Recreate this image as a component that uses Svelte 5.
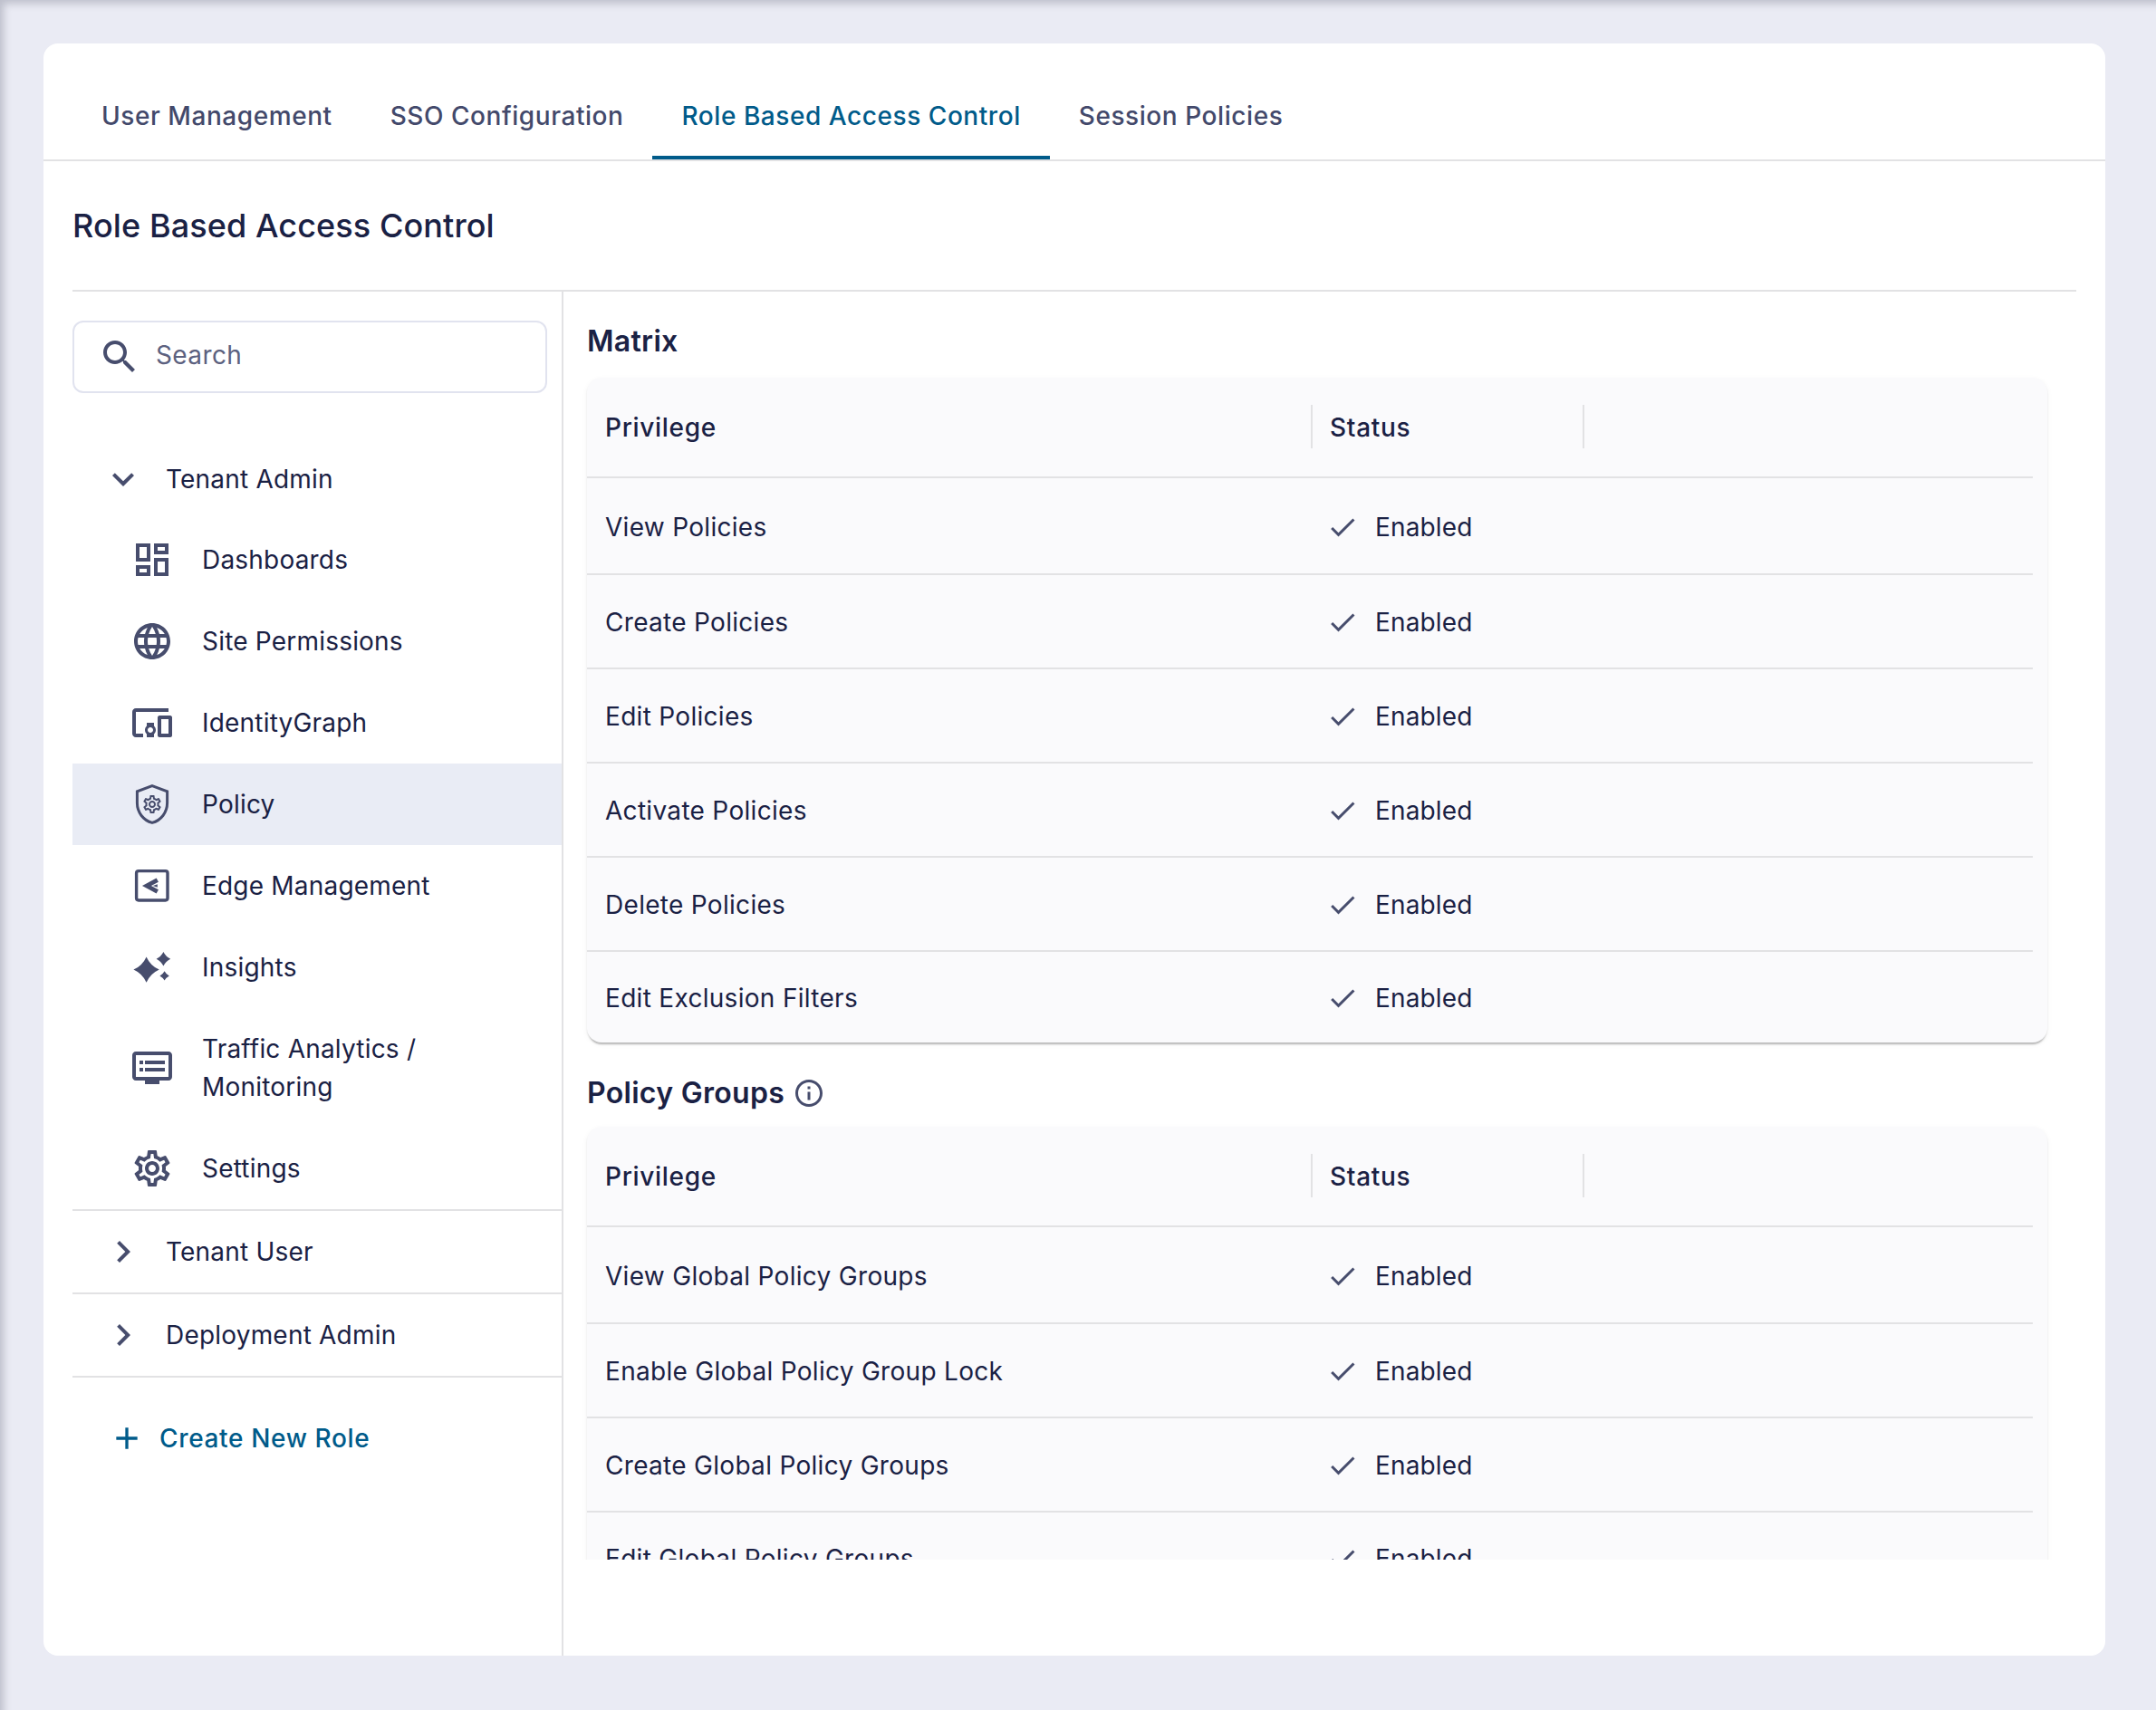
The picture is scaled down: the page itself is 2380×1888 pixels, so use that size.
<script>
  const tabs = ['User Management', 'SSO Configuration', 'Role Based Access Control', 'Session Policies'];
  const activeTab = 'Role Based Access Control';

  const gear =
    'M19.43 12.98c.04-.32.07-.64.07-.98 0-.34-.03-.66-.07-.98l2.11-1.65c.19-.15.24-.42.12-.64l-2-3.46c-.09-.16-.26-.25-.44-.25-.06 0-.12.01-.17.03l-2.49 1c-.52-.4-1.08-.73-1.69-.98l-.38-2.65C14.46 2.18 14.25 2 14 2h-4c-.25 0-.46.18-.49.42l-.38 2.65c-.61.25-1.17.59-1.69.98l-2.49-1c-.06-.02-.12-.03-.18-.03-.17 0-.34.09-.43.25l-2 3.46c-.13.22-.07.49.12.64l2.11 1.65c-.04.32-.07.65-.07.98 0 .33.03.66.07.98l-2.11 1.65c-.19.15-.24.42-.12.64l2 3.46c.09.16.26.25.44.25.06 0 .12-.01.17-.03l2.49-1c.52.4 1.08.73 1.69.98l.38 2.65c.03.24.24.42.49.42h4c.25 0 .46-.18.49-.42l.38-2.65c.61-.25 1.17-.59 1.69-.98l2.49 1c.06.02.12.03.18.03.17 0 .34-.09.43-.25l2-3.46c.12-.22.07-.49-.12-.64l-2.11-1.65zm-1.98-1.71c.04.31.05.52.05.73 0 .21-.02.43-.05.73l-.14 1.13.89.7 1.08.84-.7 1.21-1.27-.51-1.04-.42-.9.68c-.43.32-.84.56-1.25.73l-1.06.43-.16 1.13-.2 1.35h-1.4l-.19-1.35-.16-1.13-1.06-.43c-.43-.18-.83-.41-1.23-.71l-.91-.7-1.06.43-1.27.51-.7-1.21 1.08-.84.89-.7-.14-1.13c-.03-.31-.05-.54-.05-.74s.02-.43.05-.73l.14-1.13-.89-.7-1.08-.84.7-1.21 1.27.51 1.04.42.9-.68c.43-.32.84-.56 1.25-.73l1.06-.43.16-1.13.2-1.35h1.39l.19 1.35.16 1.13 1.06.43c.43.18.83.41 1.23.71l.91.7 1.06-.43 1.27-.51.7 1.21-1.07.85-.89.7.14 1.13zM12 8c-2.21 0-4 1.79-4 4s1.79 4 4 4 4-1.79 4-4-1.79-4-4-4zm0 6c-1.1 0-2-.9-2-2s.9-2 2-2 2 .9 2 2-.9 2-2 2z';

  const navItems = [
    { label: 'Dashboards', icon: 'dashboard' },
    { label: 'Site Permissions', icon: 'language' },
    { label: 'IdentityGraph', icon: 'devices' },
    { label: 'Policy', icon: 'policy', active: true },
    { label: 'Edge Management', icon: 'edge' },
    { label: 'Insights', icon: 'insights' },
    { label: 'Traffic Analytics / Monitoring', icon: 'dvr' },
    { label: 'Settings', icon: 'settings' }
  ];

  const matrix = ['View Policies', 'Create Policies', 'Edit Policies', 'Activate Policies', 'Delete Policies', 'Edit Exclusion Filters'];
  const groups = ['View Global Policy Groups', 'Enable Global Policy Group Lock', 'Create Global Policy Groups', 'Edit Global Policy Groups'];
</script>

{#snippet navIcon(name)}
  <svg class="nav-icon" viewBox="0 0 24 24" aria-hidden="true">
    {#if name === 'dashboard'}
      <path d="M19 5v2h-4V5h4M9 5v6H5V5h4m10 8v6h-4v-6h4M9 17v2H5v-2h4M21 3h-8v6h8V3zM11 3H3v10h8V3zm10 8h-8v10h8V11zm-10 4H3v6h8v-6z" />
    {:else if name === 'language'}
      <path d="M11.99 2C6.47 2 2 6.48 2 12s4.47 10 9.99 10C17.52 22 22 17.52 22 12S17.52 2 11.99 2zm6.93 6h-2.95c-.32-1.25-.78-2.45-1.38-3.56 1.84.63 3.37 1.91 4.33 3.56zM12 4.04c.83 1.2 1.48 2.53 1.91 3.96h-3.82c.43-1.43 1.08-2.76 1.91-3.96zM4.26 14C4.1 13.36 4 12.69 4 12s.1-1.36.26-2h3.38c-.08.66-.14 1.32-.14 2 0 .68.06 1.34.14 2H4.26zm.82 2h2.95c.32 1.25.78 2.45 1.38 3.56-1.84-.63-3.37-1.9-4.33-3.56zm2.95-8H5.08c.96-1.66 2.49-2.93 4.33-3.56C8.81 5.55 8.35 6.75 8.03 8zM12 19.96c-.83-1.2-1.48-2.53-1.91-3.96h3.82c-.43 1.43-1.08 2.76-1.91 3.96zM14.34 14H9.66c-.09-.66-.16-1.32-.16-2 0-.68.07-1.35.16-2h4.68c.09.65.16 1.32.16 2 0 .68-.07 1.34-.16 2zm.25 5.56c.6-1.11 1.06-2.31 1.38-3.56h2.95c-.96 1.65-2.49 2.93-4.33 3.56zM16.36 14c.08-.66.14-1.32.14-2 0-.68-.06-1.34-.14-2h3.38c.16.64.26 1.31.26 2s-.1 1.36-.26 2h-3.38z" />
    {:else if name === 'devices'}
      <path d="M3 6h18V4H3c-1.1 0-2 .9-2 2v12c0 1.1.9 2 2 2h4v-2H3V6zm10 6H9v1.78c-.61.55-1 1.33-1 2.22s.39 1.67 1 2.22V20h4v-1.78c.61-.55 1-1.34 1-2.22s-.39-1.67-1-2.22V12zm-2 5.5c-.83 0-1.5-.67-1.5-1.5s.67-1.5 1.5-1.5 1.5.67 1.5 1.5-.67 1.5-1.5 1.5zM22 8h-6c-.5 0-1 .5-1 1v10c0 .5.5 1 1 1h6c.5 0 1-.5 1-1V9c0-.5-.5-1-1-1zm-1 10h-4v-8h4v8z" />
    {:else if name === 'policy'}
      <path class="outline" d="M12 1.8 20.3 4.9v6.4c0 5.2-3.5 9.7-8.3 10.9-4.8-1.2-8.3-5.7-8.3-10.9V4.9z" />
      <path transform="translate(6 6) scale(.5)" d={gear} />
    {:else if name === 'edge'}
      <rect class="outline box" x="3.3" y="3.8" width="17.2" height="16.2" rx="1.2" />
      <path class="arm" d="M14.9 8.8 9 12l5.9 3.2" />
      <path d="M14.9 11.1 12.4 12l2.5.9z" />
    {:else if name === 'insights'}
      <path d="M8.8 6.2Q11 11.1 15.9 13.3 11 15.5 8.8 20.4 6.6 15.5 1.7 13.3 6.6 11.1 8.8 6.2z" />
      <path d="M18.2 3.5Q19.5 6.1 22.1 7.4 19.5 8.7 18.2 11.3 16.9 8.7 14.3 7.4 16.9 6.1 18.2 3.5z" />
      <path d="M18.8 14.1Q19.7 15.8 21.4 16.7 19.7 17.6 18.8 19.3 17.9 17.6 16.2 16.7 17.9 15.8 18.8 14.1z" />
    {:else if name === 'dvr'}
      <path d="M21 3H3c-1.1 0-2 .9-2 2v12c0 1.1.9 2 2 2h5v2h8v-2h5c1.1 0 1.99-.9 1.99-2L23 5c0-1.1-.9-2-2-2zm0 14H3V5h18v12zm-2-9H8v2h11V8zm0 4H8v2h11v-2zM7 8H5v2h2V8zm0 4H5v2h2v-2z" />
    {:else if name === 'settings'}
      <path d={gear} />
    {/if}
  </svg>
{/snippet}

{#snippet privilegeTable(rows)}
  <div class="table-card">
    <table>
      <thead>
        <tr>
          <th class="col-name">Privilege</th>
          <th class="col-status">Status</th>
          <th></th>
        </tr>
      </thead>
      <tbody>
        {#each rows as row}
          <tr>
            <td>{row}</td>
            <td colspan="2" class="status-cell">
              <span class="enabled">
                <svg class="check" viewBox="0 0 24 24" aria-hidden="true"><path d="M9 16.17 4.83 12l-1.42 1.41L9 19 21 7l-1.41-1.41z" /></svg>
                Enabled
              </span>
            </td>
          </tr>
        {/each}
      </tbody>
    </table>
  </div>
{/snippet}

<div class="page">
  <div class="card">
    <nav class="tabs">
      {#each tabs as tab}
        <button class="tab" class:active={tab === activeTab}>{tab}</button>
      {/each}
    </nav>

    <div class="content">
      <h1 class="title">Role Based Access Control</h1>

      <div class="columns">
        <aside class="sidebar">
          <div class="search">
            <svg class="nav-icon" viewBox="0 0 24 24" aria-hidden="true">
              <path d="M15.5 14h-.79l-.28-.27C15.41 12.59 16 11.11 16 9.5 16 5.91 13.09 3 9.5 3S3 5.91 3 9.5 5.91 16 9.5 16c1.61 0 3.09-.59 4.23-1.57l.27.28v.79l5 4.99L20.49 19l-4.99-5zm-6 0C7.01 14 5 11.99 5 9.5S7.01 5 9.5 5 14 7.01 14 9.5 11.99 14 9.5 14z" />
            </svg>
            <span class="placeholder">Search</span>
          </div>

          <div class="tree">
            <div class="group-row open">
              <svg class="nav-icon" viewBox="0 0 24 24" aria-hidden="true"><path d="M16.59 8.59 12 13.17 7.41 8.59 6 10l6 6 6-6z" /></svg>
              <span>Tenant Admin</span>
            </div>
            <ul class="items">
              {#each navItems as item}
                <li class="item" class:active={item.active}>
                  {@render navIcon(item.icon)}
                  <span class="item-label">{item.label}</span>
                </li>
              {/each}
            </ul>
            <div class="group-row">
              <svg class="nav-icon" viewBox="0 0 24 24" aria-hidden="true"><path d="M10 6 8.59 7.41 13.17 12l-4.58 4.59L10 18l6-6z" /></svg>
              <span>Tenant User</span>
            </div>
            <div class="group-row">
              <svg class="nav-icon" viewBox="0 0 24 24" aria-hidden="true"><path d="M10 6 8.59 7.41 13.17 12l-4.58 4.59L10 18l6-6z" /></svg>
              <span>Deployment Admin</span>
            </div>
          </div>

          <button class="create">
            <svg viewBox="0 0 24 24" aria-hidden="true"><path d="M19 13h-6v6h-2v-6H5v-2h6V5h2v6h6v2z" /></svg>
            Create New Role
          </button>
        </aside>

        <main class="main">
          <h2 class="section first">Matrix</h2>
          {@render privilegeTable(matrix)}

          <h2 class="section second">
            Policy Groups
            <svg class="info" viewBox="0 0 24 24" aria-hidden="true">
              <path d="M11 7h2v2h-2zm0 4h2v6h-2zm1-9C6.48 2 2 6.48 2 12s4.48 10 10 10 10-4.48 10-10S17.52 2 12 2zm0 18c-4.41 0-8-3.59-8-8s3.59-8 8-8 8 3.59 8 8-3.59 8-8 8z" />
            </svg>
          </h2>
          {@render privilegeTable(groups)}
        </main>
      </div>
    </div>
  </div>
</div>

<style>
  :global(body) {
    margin: 0;
    background: #eaebf4;
  }

  .page {
    box-sizing: border-box;
    width: 2380px;
    height: 1888px;
    padding: 48px 56px 60px 48px;
    background: #eaebf4;
    box-shadow: inset 8px 8px 8px -4px rgba(30, 35, 60, 0.22);
    font-family: Inter, "Noto Sans", sans-serif;
    color: #1a2144;
    overflow: hidden;
  }

  .card {
    height: 1780px;
    background: #ffffff;
    border-radius: 16px;
    display: flex;
    flex-direction: column;
    overflow: hidden;
  }

  .tabs {
    display: flex;
    height: 96px;
    padding: 32px 0 0 32px;
    border-bottom: 2px solid #e2e2e4;
    flex: none;
  }
  .tab {
    padding: 4px 32px 0;
    margin: 0;
    border: 0;
    border-bottom: 4px solid transparent;
    background: none;
    font: 450 28px/40px Inter, sans-serif;
    letter-spacing: 0.56px;
    color: #43496b;
  }
  .tab.active {
    color: #005b8a;
    border-bottom-color: #005b8a;
  }

  .content {
    flex: 1;
    min-height: 0;
    padding: 0 32px;
    display: flex;
    flex-direction: column;
  }

  .title {
    height: 144px;
    margin: 0;
    box-sizing: border-box;
    padding-top: 49px;
    font-size: 36px;
    line-height: 44px;
    font-weight: 450;
    letter-spacing: 0.1px;
    border-bottom: 2px solid #e2e2e4;
    flex: none;
  }

  .columns {
    display: flex;
    flex: 1;
    min-height: 0;
  }

  .sidebar {
    width: 540px;
    flex: none;
    border-right: 2px solid #e2e2e4;
  }

  .search {
    height: 80px;
    box-sizing: border-box;
    margin: 32px 16px 0 0;
    padding-left: 26px;
    display: flex;
    align-items: center;
    gap: 16px;
    border: 2px solid #e1e3ef;
    border-radius: 12px;
  }
  .placeholder {
    font-size: 28px;
    line-height: 40px;
    margin-top: -4px;
    letter-spacing: 0.4px;
    color: #5c617f;
  }

  .nav-icon {
    width: 48px;
    height: 48px;
    flex: none;
    fill: #474d6d;
  }
  .outline,
  .arm {
    fill: none;
    stroke: #474d6d;
    stroke-width: 1.5;
  }
  .outline.box {
    stroke-width: 1.7;
  }
  .arm {
    stroke-width: 2.4;
  }

  .tree {
    margin-top: 50px;
    font-size: 28px;
    letter-spacing: 0.2px;
  }
  .group-row {
    height: 90px;
    padding-left: 32px;
    display: flex;
    align-items: center;
    gap: 23px;
    border-bottom: 2px solid #e2e2e4;
  }
  .group-row.open {
    border-bottom: 0;
    height: 89px;
  }

  .items {
    list-style: none;
    margin: 0;
    padding: 0;
    border-bottom: 2px solid #e2e2e4;
  }
  .item {
    box-sizing: border-box;
    min-height: 90px;
    padding: 24px 60px 24px 64px;
    display: flex;
    align-items: center;
    gap: 31px;
    line-height: 42px;
  }
  .item .nav-icon {
    margin: -4px 0;
  }
  .item.active {
    background: #e9ecf5;
  }

  .create {
    height: 90px;
    margin: 22px 0 0 32px;
    padding: 0;
    display: flex;
    align-items: center;
    gap: 16px;
    border: 0;
    background: none;
    font: 450 28px Inter, sans-serif;
    letter-spacing: 0.65px;
    color: #005b8a;
  }
  .create svg {
    width: 40px;
    height: 40px;
    margin-left: 8px;
    fill: #005b8a;
  }

  .main {
    flex: 1;
    min-width: 0;
    height: 1400px;
    padding: 0 32px 0 26px;
    overflow: hidden;
  }

  .section {
    display: flex;
    align-items: center;
    gap: 9px;
    margin: 0;
    font-size: 32px;
    line-height: 40px;
    font-weight: 600;
    letter-spacing: 0.3px;
  }
  .section.first {
    padding-top: 35px;
    margin-bottom: 20px;
  }
  .section.second {
    margin-top: 36px;
    margin-bottom: 17px;
  }
  .info {
    width: 36px;
    height: 36px;
    fill: #474d6d;
  }

  .table-card {
    padding-right: 16px;
    background: #fafafc;
    border-radius: 16px;
    box-shadow: 0 4px 2px -2px rgba(0, 0, 0, 0.2), 0 2px 2px rgba(0, 0, 0, 0.08), 0 2px 6px rgba(0, 0, 0, 0.05);
  }

  table {
    width: 100%;
    table-layout: fixed;
    border-collapse: collapse;
    font-size: 28px;
    letter-spacing: 0.3px;
  }
  th {
    height: 109px;
    padding: 0 0 0 20px;
    position: relative;
    text-align: left;
    font-weight: 500;
    letter-spacing: 0.7px;
    border-bottom: 2px solid #e2e2e4;
  }
  .col-name { width: 781px; }
  .col-status {
    width: 281px;
    padding-left: 19px;
  }
  .col-name::after,
  .col-status::after {
    content: '';
    position: absolute;
    right: 0;
    top: 30px;
    height: 48px;
    width: 2px;
    background: #e2e2e4;
  }
  td {
    height: 100px;
    padding: 2px 0 0 20px;
    border-bottom: 2px solid #e2e2e4;
  }
  td.status-cell {
    padding-left: 19px;
  }
  tbody tr:first-child td {
    height: 103px;
  }
  tbody tr:last-child td {
    height: 98px;
    border-bottom: 0;
  }

  .enabled {
    display: flex;
    align-items: center;
    gap: 18px;
    margin-left: -4px;
    letter-spacing: 0.15px;
  }
  .check {
    width: 36px;
    height: 36px;
    fill: #474d6d;
  }
</style>
